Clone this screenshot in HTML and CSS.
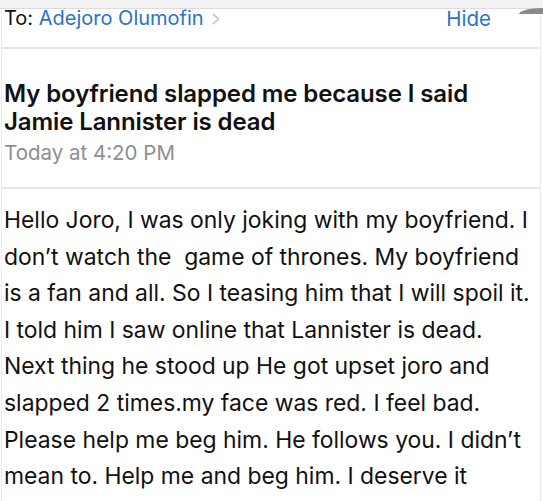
FILE: index.html
```html
<!DOCTYPE html>
<html>
<head>
<meta charset="utf-8">
<link rel="stylesheet" href="styles.css">
</head>
<body>
<div class="topstrip"><span class="corner"></span></div>
<div class="sheet">
  <div class="to-row">
    <div class="to">To: <span class="name">Adejoro Olumofin</span><span class="chev">&gt;</span></div>
    <div class="hide">Hide</div>
  </div>
  <div class="subject">
    <div class="title">My boyfriend slapped me because I said<br>Jamie Lannister is dead</div>
    <div class="date">Today at 4:20 PM</div>
  </div>
  <div class="body">Hello Joro, I was only joking with my boyfriend. I<br>don’t watch the &nbsp;game of thrones. My boyfriend<br>is a fan and all. So I teasing him that I will spoil it.<br>I told him I saw online that Lannister is dead.<br>Next thing he stood up He got upset joro and<br>slapped 2 times.my face was red. I feel bad.<br>Please help me beg him. He follows you. I didn’t<br>mean to. Help me and beg him. I deserve it</div>
</div>
</body>
</html>
```
FILE: styles.css
```css
html, body {
  margin: 0;
  padding: 0;
  background: #fff;
}
body {
  width: 543px;
  height: 501px;
  overflow: hidden;
  font-family: Inter, "Liberation Sans", sans-serif;
  color: #111;
}
.topstrip {
  height: 8px;
  background: #f2f2f4;
  border-bottom: 1px solid #dcdcde;
  position: relative;
}
.corner {
  position: absolute;
  right: 0;
  top: 8px;
  width: 24px;
  height: 6px;
  background: #8a8a8e;
  border-top-left-radius: 24px 6px;
}
.sheet {
  margin: 0 2px 0 1px;
  border-left: 1px solid #ececec;
  border-right: 1px solid #ececec;
  height: 492px;
}
.to-row {
  display: flex;
  justify-content: space-between;
  align-items: flex-start;
  height: 38px;
  padding: 0 49px 0 2px;
  border-bottom: 2px solid #e6e6e8;
  font-size: 20px;
  line-height: 19px;
}
.name { color: #2a72c8; }
.chev {
  color: #c4c4c8;
  margin-left: 5px;
  display: inline-block;
  transform: scaleX(0.65) scaleY(1.15);
}
.hide { color: #2a72c8; font-size: 20.5px; }
.subject {
  padding: 31px 0 0 2px;
  height: 107px;
  border-bottom: 2px solid #e6e6e8;
}
.title {
  font-weight: 600;
  font-size: 24px;
  line-height: 28px;
  letter-spacing: -0.1px;
}
.date {
  color: #8e8e93;
  font-size: 20.5px;
  line-height: 26px;
  margin-top: 4px;
}
.body {
  padding: 13px 0 0 2px;
  font-size: 22.9px;
  line-height: 36.6px;
  white-space: nowrap;
}
```
